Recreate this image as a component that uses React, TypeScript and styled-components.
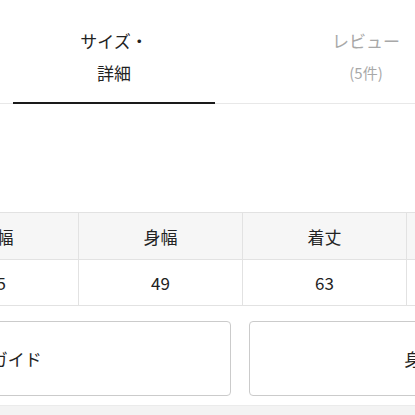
import React from "react";
import styled, { createGlobalStyle } from "styled-components";

const GlobalStyle = createGlobalStyle`
  html, body {
    margin: 0;
    padding: 0;
    background: #fff;
  }
  body {
    font-family: "Noto Sans CJK JP", "Noto Sans", sans-serif;
    color: #222;
    overflow: hidden;
  }
`;

interface TabData {
  label: string[];
  count?: string;
  active?: boolean;
}

const tabs: TabData[] = [
  { label: ["サイズ・", "詳細"], active: true },
  { label: ["レビュー"], count: "(5件)" },
];

const columns = ["肩幅", "身幅", "着丈", "袖丈"];
const values = ["45", "49", "63", "20"];

function App() {
  return (
    <Page>
      <GlobalStyle />
      <TabBar>
        {tabs.map((tab) => (
          <Tab key={tab.label.join("")} $active={!!tab.active}>
            {tab.label.map((line) => (
              <TabLine key={line}>{line}</TabLine>
            ))}
            {tab.count && <TabCount>{tab.count}</TabCount>}
          </Tab>
        ))}
      </TabBar>

      <SizeSection>
        <SizeTable>
          <thead>
            <tr>
              {columns.map((c) => (
                <HeadCell key={c}>{c}</HeadCell>
              ))}
            </tr>
          </thead>
          <tbody>
            <tr>
              {values.map((v, i) => (
                <Cell key={i}>{v}</Cell>
              ))}
            </tr>
          </tbody>
        </SizeTable>
      </SizeSection>

      <ButtonRow>
        <GuideButton>サイズガイド</GuideButton>
        <GuideButton>身長からサイズを探す</GuideButton>
      </ButtonRow>

      <Footer />
    </Page>
  );
}

const Page = styled.div`
  width: 415px;
  height: 415px;
  overflow: hidden;
  display: flex;
  flex-direction: column;
`;

const TabBar = styled.div`
  display: flex;
  gap: 50px;
  padding-left: 13px;
  border-bottom: 1px solid #e8e8e8;
`;

const Tab = styled.div<{ $active: boolean }>`
  flex: 0 0 202px;
  display: flex;
  flex-direction: column;
  align-items: center;
  padding: 25px 0 13px;
  margin-bottom: -1px;
  border-bottom: 2px solid ${(p) => (p.$active ? "#1a1a1a" : "transparent")};
  color: ${(p) => (p.$active ? "#222" : "#a8a8a8")};
`;

const TabLine = styled.span`
  font-size: 17px;
  line-height: 32px;
  white-space: nowrap;
`;

const TabCount = styled.span`
  font-size: 15px;
  line-height: 32px;
`;

const SizeSection = styled.div`
  margin-top: 108px;
  margin-left: -86px;
`;

const SizeTable = styled.table`
  border-collapse: collapse;
  table-layout: fixed;
  width: ${163 * 4}px;
`;

const HeadCell = styled.th`
  width: 163px;
  height: 46px;
  padding: 0;
  background: #f6f6f6;
  border: 1px solid #e2e2e2;
  font-weight: 400;
  font-size: 17px;
  color: #222;
  text-align: center;
`;

const Cell = styled.td`
  height: 45px;
  padding: 0;
  background: #fff;
  border: 1px solid #e2e2e2;
  font-size: 17px;
  color: #222;
  text-align: center;
`;

const ButtonRow = styled.div`
  display: flex;
  gap: 18px;
  margin-top: 15px;
  margin-left: -249px;
`;

const GuideButton = styled.button`
  flex: 0 0 480px;
  height: 75px;
  background: #fff;
  border: 1px solid #cbcbcb;
  border-radius: 4px;
  font-family: "Noto Sans CJK JP", "Noto Sans", sans-serif;
  font-size: 17px;
  color: #222;
  white-space: nowrap;
`;

const Footer = styled.div`
  margin-top: 9px;
  flex: 1;
  background: #f3f3f3;
  border-top: 1px solid #ebebeb;
`;

export default App;
